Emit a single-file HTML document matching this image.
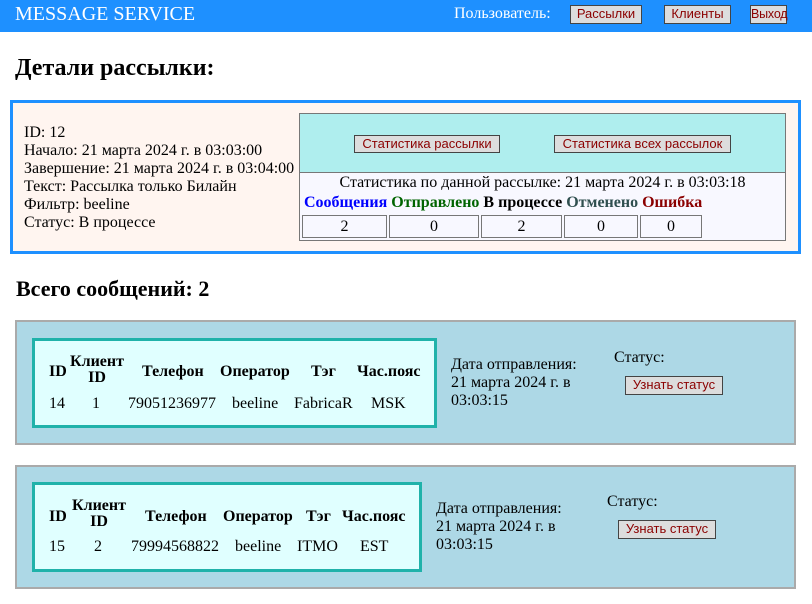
<!DOCTYPE html>
<html><head><meta charset="utf-8"><style>
*{margin:0;padding:0;box-sizing:border-box}
body{width:812px;height:604px;overflow:hidden;background:#fff;font-family:"Liberation Serif","DejaVu Serif",serif;font-size:16px;color:#000;position:relative}
.a{position:absolute;white-space:nowrap}
.btn{position:absolute;background:#ddd;border:1px solid #444;color:#8b0000;font-family:"Liberation Sans",sans-serif;font-size:13px;text-align:center;line-height:16px}
.c{position:absolute;border:1px solid #777;background:#f8f8ff;text-align:center;line-height:21px;top:215px;height:23px}
.card{position:absolute;left:15px;width:781px;background:#add8e6;border:2px solid #aaa}
.inner{position:absolute;left:32px;border:3px solid #20b2aa;background:#e0ffff}
.b{font-weight:bold}
</style></head><body>
<div class="a" style="left:0;top:0;width:812px;height:32px;background:#1e90ff"></div>
<div class="a" style="left:15px;top:3px;color:#fff;font-size:20px">MESSAGE SERVICE</div>
<div class="a" style="left:454px;top:5px;color:#fff;font-size:16px">Пользователь:</div>
<div class="btn" style="left:570px;top:5px;width:72px;height:19px">Рассылки</div>
<div class="btn" style="left:664px;top:5px;width:67px;height:19px">Клиенты</div>
<div class="btn" style="left:750px;top:5px;width:37px;height:19px;font-size:12.5px;letter-spacing:-0.2px">Выход</div>
<div class="a b" style="left:15px;top:55px;font-size:24px">Детали рассылки:</div>
<div class="a" style="left:10px;top:100px;width:791px;height:154px;border:3px solid #1e90ff;background:#fff5f0"></div>
<div class="a" style="left:24px;top:124px;line-height:18px">ID: 12<br>Начало: 21 марта 2024 г. в 03:03:00<br>Завершение: 21 марта 2024 г. в 03:04:00<br>Текст: Рассылка только Билайн<br>Фильтр: beeline<br>Статус: В процессе</div>
<div class="a" style="left:299px;top:113px;width:487px;height:128px;border:1px solid #777;background:#f8f8ff"></div>
<div class="a" style="left:300px;top:114px;width:485px;height:59px;background:#afeeee;border-bottom:1px solid #777"></div>
<div class="btn" style="left:354px;top:135px;width:146px;height:18px">Статистика рассылки</div>
<div class="btn" style="left:554px;top:135px;width:177px;height:18px">Статистика всех рассылок</div>
<div class="a" style="left:300px;top:174px;width:485px;text-align:center">Статистика по данной рассылке: 21 марта 2024 г. в 03:03:18</div>
<div class="a b" style="left:304px;top:194px"><span style="color:#00f">Сообщения</span> <span style="color:#006400">Отправлено</span> <span>В процессе</span> <span style="color:#2f4f4f">Отменено</span> <span style="color:#8b0000">Ошибка</span></div>
<div class="c" style="left:302px;width:85px">2</div>
<div class="c" style="left:389px;width:90px">0</div>
<div class="c" style="left:481px;width:81px">2</div>
<div class="c" style="left:564px;width:74px">0</div>
<div class="c" style="left:640px;width:62px">0</div>
<div class="a b" style="left:16px;top:276px;font-size:22px">Всего сообщений: 2</div>

<div class="card" style="top:320px;height:125px"></div>
<div class="inner" style="top:338px;width:405px;height:90px"></div>
<div class="a b" style="left:49px;top:363px">ID</div>
<div class="a b" style="left:70px;top:354px;line-height:16px;text-align:center">Клиент<br>ID</div>
<div class="a b" style="left:142px;top:363px">Телефон</div>
<div class="a b" style="left:220px;top:363px">Оператор</div>
<div class="a b" style="left:311px;top:363px">Тэг</div>
<div class="a b" style="left:357px;top:363px">Час.пояс</div>
<div class="a" style="left:49px;top:395px">14</div>
<div class="a" style="left:92px;top:395px">1</div>
<div class="a" style="left:128px;top:395px">79051236977</div>
<div class="a" style="left:232px;top:395px">beeline</div>
<div class="a" style="left:294px;top:395px">FabricaR</div>
<div class="a" style="left:371px;top:395px">MSK</div>
<div class="a" style="left:451px;top:356px;line-height:18px">Дата отправления:<br>21 марта 2024 г. в<br>03:03:15</div>
<div class="a" style="left:614px;top:349px">Статус:</div>
<div class="btn" style="left:625px;top:376px;width:98px;height:19px">Узнать статус</div>

<div class="card" style="top:465px;height:124px"></div>
<div class="inner" style="top:482px;width:390px;height:90px"></div>
<div class="a b" style="left:49px;top:508px">ID</div>
<div class="a b" style="left:72px;top:498px;line-height:16px;text-align:center">Клиент<br>ID</div>
<div class="a b" style="left:145px;top:508px">Телефон</div>
<div class="a b" style="left:223px;top:508px">Оператор</div>
<div class="a b" style="left:306px;top:508px">Тэг</div>
<div class="a b" style="left:342px;top:508px">Час.пояс</div>
<div class="a" style="left:49px;top:538px">15</div>
<div class="a" style="left:94px;top:538px">2</div>
<div class="a" style="left:131px;top:538px">79994568822</div>
<div class="a" style="left:235px;top:538px">beeline</div>
<div class="a" style="left:297px;top:538px">ITMO</div>
<div class="a" style="left:360px;top:538px">EST</div>
<div class="a" style="left:436px;top:500px;line-height:18px">Дата отправления:<br>21 марта 2024 г. в<br>03:03:15</div>
<div class="a" style="left:607px;top:493px">Статус:</div>
<div class="btn" style="left:618px;top:520px;width:98px;height:19px">Узнать статус</div>
</body></html>
